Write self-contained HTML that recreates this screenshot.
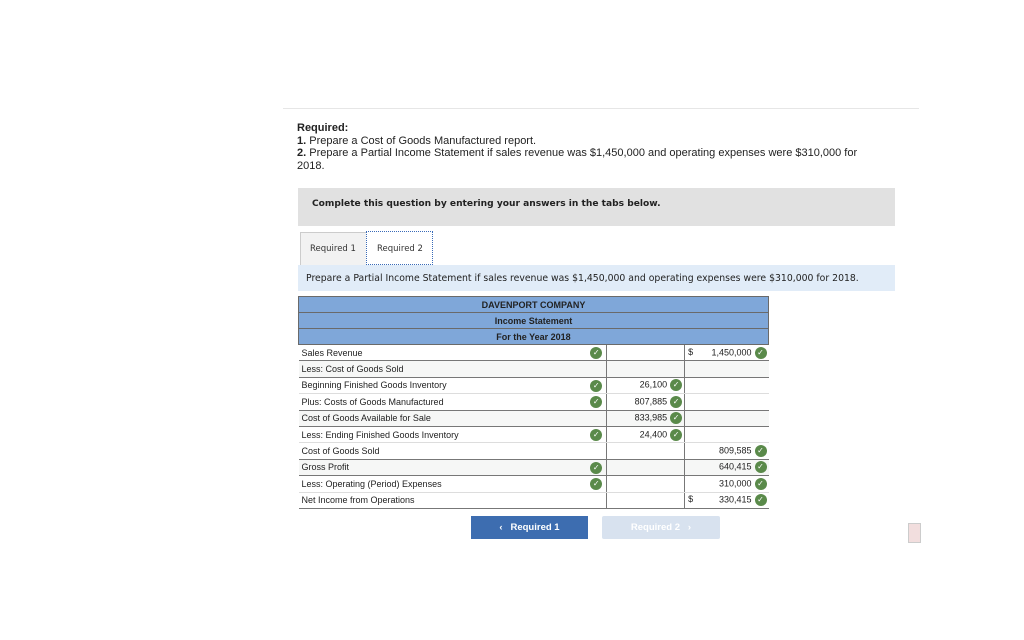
<!DOCTYPE html><html><head><style>
body{margin:0;width:1024px;height:640px;background:#fff;font-family:"Liberation Sans",sans-serif;position:relative;overflow:hidden}
.a{position:absolute}
.t{font-size:11px;color:#222}
.dv{font-family:"DejaVu Sans",sans-serif}
table{border-collapse:collapse;position:absolute;left:298px;top:296px;width:471px;font-size:9px;color:#222}
td{height:15.4px;padding:0 3px;border:1px solid #777;border-left:none;border-right:none;position:relative}
.h td{background:#7fa7d9;text-align:center;font-weight:bold;border:1px solid #6a6a6a;height:15px}
.c{display:inline-block;width:12px;height:12px;border-radius:50%;background:#5a8a4a;color:#fff;font-size:8px;line-height:12px;text-align:center;vertical-align:middle;margin-left:3px}
td.v{border-left:1px solid #777;text-align:right;padding-right:2px}
tr.g td{background:#f6f7f6}
tr.d td{border-top:1px solid #ddd;border-bottom:1px solid #ddd}
</style></head><body>
<div class="a" style="left:283px;top:108px;width:636px;height:1px;background:#e6e6e6"></div>
<div class="a t" style="left:297px;top:122px;line-height:12.5px;font-size:11px">
<b>Required:</b><br><b>1.</b> Prepare a Cost of Goods Manufactured report.<br><b>2.</b> Prepare a Partial Income Statement if sales revenue was $1,450,000 and operating expenses were $310,000 for<br>2018.</div>
<div class="a" style="left:298px;top:188px;width:597px;height:38px;background:#e1e1e1"></div>
<div class="a dv" style="left:312px;top:199px;font-size:9.1px;font-weight:bold;color:#222">Complete this question by entering your answers in the tabs below.</div>
<div class="a" style="left:300px;top:232px;width:66px;height:32px;background:#f2f2f2;border:1px solid #ccc"></div>
<div class="a dv" style="left:310px;top:244px;font-size:8.5px;color:#333">Required 1</div>
<div class="a" style="left:366px;top:231px;width:67px;height:34px;background:#fff;border:1px dotted #3a6bb8;box-sizing:border-box"></div>
<div class="a dv" style="left:377px;top:244px;font-size:8.5px;color:#333">Required 2</div>
<div class="a" style="left:298px;top:265px;width:597px;height:26px;background:#e1ecf8"></div>
<div class="a dv" style="left:306px;top:273px;font-size:9.3px;color:#222">Prepare a Partial Income Statement if sales revenue was $1,450,000 and operating expenses were $310,000 for 2018.</div>
<table>
<colgroup><col style="width:309px"><col style="width:78px"><col style="width:84px"></colgroup>
<tr class="h"><td colspan="3">DAVENPORT COMPANY</td></tr>
<tr class="h"><td colspan="3">Income Statement</td></tr>
<tr class="h"><td colspan="3">For the Year 2018</td></tr>
<tr><td>Sales Revenue<span class="c a" style="right:4px;top:2px">✓</span></td><td class="v"></td><td class="v"><span style="float:left">$</span>1,450,000<span class="c">✓</span></td></tr>
<tr class="g"><td>Less: Cost of Goods Sold</td><td class="v"></td><td class="v"></td></tr>
<tr class="d"><td>Beginning Finished Goods Inventory<span class="c a" style="right:4px;top:2px">✓</span></td><td class="v">26,100<span class="c">✓</span></td><td class="v"></td></tr>
<tr><td>Plus: Costs of Goods Manufactured<span class="c a" style="right:4px;top:2px">✓</span></td><td class="v">807,885<span class="c">✓</span></td><td class="v"></td></tr>
<tr class="g"><td>Cost of Goods Available for Sale</td><td class="v">833,985<span class="c">✓</span></td><td class="v"></td></tr>
<tr class="d"><td>Less: Ending Finished Goods Inventory<span class="c a" style="right:4px;top:2px">✓</span></td><td class="v">24,400<span class="c">✓</span></td><td class="v"></td></tr>
<tr><td>Cost of Goods Sold</td><td class="v"></td><td class="v">809,585<span class="c">✓</span></td></tr>
<tr class="g"><td>Gross Profit<span class="c a" style="right:4px;top:2px">✓</span></td><td class="v"></td><td class="v">640,415<span class="c">✓</span></td></tr>
<tr class="d"><td>Less: Operating (Period) Expenses<span class="c a" style="right:4px;top:2px">✓</span></td><td class="v"></td><td class="v">310,000<span class="c">✓</span></td></tr>
<tr><td>Net Income from Operations</td><td class="v"></td><td class="v"><span style="float:left">$</span>330,415<span class="c">✓</span></td></tr>
</table>
<div class="a" style="left:471px;top:516px;width:117px;height:23px;background:#3d6db0;color:#fff;font-size:9.5px;font-weight:bold;text-align:center;line-height:23px">&lsaquo;&nbsp;&nbsp; Required 1</div>
<div class="a" style="left:602px;top:516px;width:118px;height:23px;background:#d8e2ef;color:#fff;font-size:9.5px;font-weight:bold;text-align:center;line-height:23px;border-radius:2px">Required 2 &nbsp;&nbsp;&rsaquo;</div>
<div class="a" style="left:908px;top:523px;width:11px;height:18px;background:#f2dede;border:1px solid #ccc"></div>
</body></html>
